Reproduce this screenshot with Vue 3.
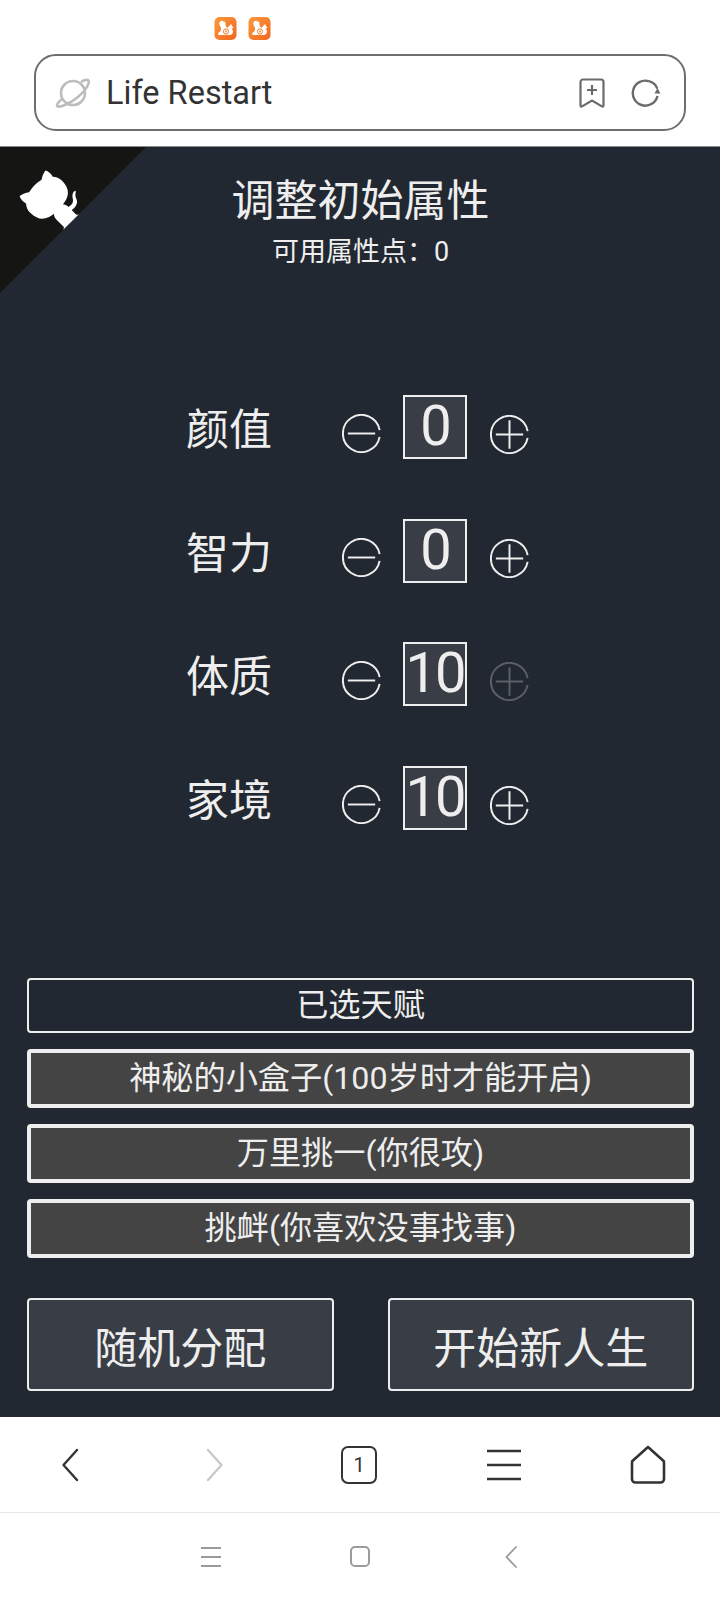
<script setup>
const stats = [
  { name: '颜值', value: 0, full: false },
  { name: '智力', value: 0, full: false },
  { name: '体质', value: 10, full: true },
  { name: '家境', value: 10, full: false }
]

const talents = [
  '神秘的小盒子(100岁时才能开启)',
  '万里挑一(你很攻)',
  '挑衅(你喜欢没事找事)'
]
</script>

<template>
  <div class="page">
    <header class="browser-top">
      <div class="status">
        <svg v-for="n in 2" :key="n" class="uc" viewBox="0 0 22 23">
          <defs>
            <linearGradient :id="'uc' + n" x1="0" y1="0" x2="1" y2="1">
              <stop offset="0" stop-color="#fb9a3c" />
              <stop offset="1" stop-color="#f2661f" />
            </linearGradient>
          </defs>
          <rect width="22" height="23" rx="5" :fill="'url(#uc' + n + ')'" />
          <path d="M8 3.500c-2.800.4-3.900 2.700-2.800 4.800 1 1.900 1.900 3.200.9 5.400-.6 1.300-1.500 1.900-2.300 2.100v2.200h11.200c2.300 0 3.500-1.500 3.500-3.400 0-1.300-.7-2.300-1.700-2.900l2.200-.6-1.500-2.400-.9-1.700-1.500 1.400-2.400 2.500c-1.300-1.800-2-3.200-1.800-4.700.2-1.300-.6-2.100-2.800-1.700z" fill="#fff" />
          <circle cx="11.500" cy="14.500" r="2.600" fill="none" stroke="#f47a28" stroke-width="1" />
          <circle cx="11.500" cy="14.500" r=".9" fill="#f47a28" />
        </svg>
      </div>
      <div class="address">
        <svg class="planet" viewBox="0 0 36 30" fill="none" stroke="#bdbdbd" stroke-width="2.600">
          <circle cx="18" cy="15" r="12" />
          <path d="M7 21C2 25 1 28 3 28.500c3 .7 12-3 20-9.500S35 4.500 33.500 2.500C32.500 1.200 29 2 26 4" />
        </svg>
        <span class="site">Life Restart</span>
        <svg class="bookmark" viewBox="0 0 26 30" fill="none" stroke="#6b6b6b" stroke-width="2.200">
          <path d="M4 1.500h18a2.500 2.500 0 0 1 2.500 2.500v23.500c0 1-.9 1.300-1.600.8L13 22.500 3.100 28.300c-.7.500-1.600.2-1.600-.8V4A2.500 2.500 0 0 1 4 1.500z" />
          <path d="M13 7v10M8 12h10" />
        </svg>
        <svg class="reload" viewBox="0 0 30 28" fill="none" stroke="#6b6b6b" stroke-width="2.400">
          <path d="M26.500 17A12.500 12.500 0 1 1 18 2.200" />
          <path d="M18 2.200c4 1 7 3.800 8.300 7.500" />
          <path d="M23.500 14.500h6l-3-5.500z" fill="#6b6b6b" stroke="none" />
        </svg>
      </div>
    </header>

    <main class="game">
      <svg class="corner" viewBox="0 0 250 250">
        <path d="M0,0 L115,115 L130,115 L142,142 L250,250 L250,0 Z" fill="#151513" />
        <path d="M128.3,109.0 C113.8,99.7 119.0,89.6 119.0,89.6 C122.0,82.7 120.5,78.6 120.5,78.6 C119.2,72.0 123.4,76.3 123.4,76.3 C127.3,80.9 125.5,87.3 125.5,87.3 C122.9,97.6 130.6,101.9 134.4,103.2" fill="#fff" />
        <path d="M115.0,115.0 C114.9,115.1 118.7,116.5 119.8,115.4 L133.7,101.6 C136.9,99.2 139.9,98.4 142.2,98.6 C133.8,88.0 127.5,74.4 143.8,58.0 C148.5,53.4 154.0,51.2 159.7,51.0 C160.3,49.4 163.2,43.6 171.4,40.1 C171.4,40.1 176.1,42.5 178.8,56.2 C183.1,58.6 187.2,61.8 190.9,65.4 C194.5,69.0 197.7,73.2 200.1,77.6 C213.8,80.2 216.3,84.9 216.3,84.9 C212.7,93.1 206.9,96.0 205.4,96.6 C205.1,102.4 203.0,107.8 198.3,112.5 C181.9,128.9 168.3,122.5 157.7,114.1 C157.9,116.9 156.7,120.9 152.7,124.9 L141.0,136.5 C139.8,137.7 141.6,141.9 141.8,141.8 Z" fill="#fff" />
      </svg>

      <h1 class="title">调整初始属性</h1>
      <div class="points">可用属性点：0</div>

      <section class="stats">
        <div v-for="s in stats" :key="s.name" class="stat">
          <span class="stat-name">{{ s.name }}</span>
          <svg class="round minus" viewBox="0 0 40 40" fill="none" stroke="currentColor" stroke-width="2">
            <path d="M38.600 16.500A19 19 0 1 0 38.600 23.500" />
            <path d="M6 20h28" />
          </svg>
          <span class="stat-value">{{ s.value }}</span>
          <svg class="round plus" :class="{ off: s.full }" viewBox="0 0 40 40" fill="none" stroke="currentColor" stroke-width="2">
            <path d="M38.600 16.500A19 19 0 1 0 38.600 23.500" />
            <path d="M6 20h28M20 5.500v29" />
          </svg>
        </div>
      </section>

      <section class="talents">
        <div class="talent-head">已选天赋</div>
        <div v-for="t in talents" :key="t" class="talent">{{ t }}</div>
      </section>

      <div class="actions">
        <div class="action">随机分配</div>
        <div class="action">开始新人生</div>
      </div>
    </main>

    <nav class="browser-nav">
      <svg class="nav-icon" viewBox="0 0 36 40" fill="none" stroke="#333" stroke-width="2.400" stroke-linecap="round" stroke-linejoin="round">
        <path d="M25 5 11.500 20 25 35" />
      </svg>
      <svg class="nav-icon" viewBox="0 0 36 40" fill="none" stroke="#c9c9c9" stroke-width="2.400" stroke-linecap="round" stroke-linejoin="round">
        <path d="M11 5 24.500 20 11 35" />
      </svg>
      <div class="tabs">1</div>
      <svg class="nav-icon" viewBox="0 0 36 40" fill="none" stroke="#333" stroke-width="2.600">
        <path d="M1 6h34M1 20h34M1 34h34" />
      </svg>
      <svg class="nav-icon" viewBox="0 0 36 40" fill="none" stroke="#333" stroke-width="2.600" stroke-linejoin="round">
        <path d="M18 2 33 15.500a2 2 0 0 1 1 2V34a3.500 3.500 0 0 1-3.500 3.500h-25A3.500 3.500 0 0 1 2 34V17.500a2 2 0 0 1 1-2z" />
      </svg>
    </nav>

    <div class="system-nav">
      <svg class="sys-lines" viewBox="0 0 20 20" fill="none" stroke="#9b9b9b" stroke-width="2">
        <path d="M0 1h20M0 10h20M0 19h20" />
      </svg>
      <div class="sys-square"></div>
      <svg class="sys-back" viewBox="0 0 12 22" fill="none" stroke="#9b9b9b" stroke-width="1.800" stroke-linecap="round">
        <path d="M11 1 1.500 11 11 21" />
      </svg>
    </div>
  </div>
</template>

<style scoped>
.page {
  width: 720px;
  height: 1600px;
  display: flex;
  flex-direction: column;
  background: #fff;
  font-family: Roboto, "Noto Sans CJK SC", sans-serif;
  overflow: hidden;
}

.browser-top {
  height: 147px;
  flex: none;
  box-sizing: border-box;
  padding-top: 17px;
  border-bottom: 1px solid #8a8a8a;
}

.status {
  height: 23px;
  display: flex;
  gap: 11px;
  padding-left: 214px;
}

.uc {
  width: 23px;
  height: 23px;
}

.address {
  box-sizing: border-box;
  width: 652px;
  height: 77px;
  margin: 14px 0 0 34px;
  border: 2px solid #6e6e6e;
  border-radius: 22px;
  display: flex;
  align-items: center;
  padding: 0 23px 0 19px;
}

.planet {
  width: 36px;
  height: 30px;
  flex: none;
}

.site {
  margin-left: 15px;
  flex: 1;
  font-size: 32.500px;
  color: #333;
}

.bookmark {
  width: 26px;
  height: 30px;
}

.reload {
  width: 30px;
  height: 28px;
  margin-left: 26px;
}

.game {
  position: relative;
  flex: 1;
  background: #222831;
  color: #eee;
  text-align: center;
  padding: 0 26px 0 27px;
}

.corner {
  position: absolute;
  left: 0;
  top: 0;
  width: 146px;
  height: 146px;
  transform: scaleX(-1);
}

.title {
  margin: 25px 0 0;
  font-size: 43px;
  line-height: 58px;
  font-weight: 400;
}

.points {
  margin-top: 5px;
  font-size: 27px;
  line-height: 34px;
}

.stats {
  margin-top: 126px;
  display: flex;
  flex-direction: column;
  gap: 59.500px;
  padding-left: 159px;
}

.stat {
  height: 64px;
  display: flex;
  align-items: center;
}

.stat-name {
  width: 156px;
  flex: none;
  text-align: left;
  font-size: 43px;
  margin-top: -2px;
}

.round {
  width: 39px;
  height: 39px;
  flex: none;
  margin-top: 13px;
  color: #eee;
}

.round.plus {
  margin-top: 15px;
}

.round.off {
  color: #5c5f65;
}

.stat-value {
  box-sizing: border-box;
  width: 64px;
  height: 64px;
  margin: 0 23px 0 22px;
  border: 2.500px solid #eee;
  background: #393e46;
  font-size: 56px;
  line-height: 59px;
  letter-spacing: -2px;
  white-space: nowrap;
}

.talents {
  margin-top: 148.500px;
  display: flex;
  flex-direction: column;
  gap: 16px;
}

.talent-head,
.talent {
  box-sizing: border-box;
  display: flex;
  align-items: center;
  justify-content: center;
  border-radius: 4px;
  font-size: 32.200px;
  padding-bottom: 7px;
}

.talent-head {
  height: 55px;
  border: 2.500px solid #eee;
}

.talent {
  height: 59px;
  border: 4.500px solid #eee;
  background: #444;
}

.actions {
  margin-top: 40px;
  display: flex;
  justify-content: space-between;
}

.action {
  box-sizing: border-box;
  width: 306.500px;
  height: 93px;
  display: flex;
  align-items: center;
  justify-content: center;
  border: 2px solid #eee;
  border-radius: 4px;
  background: #393e46;
  font-size: 43px;
}

.browser-nav {
  height: 96px;
  flex: none;
  box-sizing: border-box;
  border-bottom: 1px solid #e8e8e8;
  display: grid;
  grid-template-columns: repeat(5, 36px);
  justify-content: space-between;
  align-items: center;
  padding: 0 54px 0 52px;
}

.nav-icon {
  width: 36px;
  height: 40px;
}

.tabs {
  box-sizing: border-box;
  width: 36px;
  height: 38px;
  border: 2.500px solid #333;
  border-radius: 7px;
  display: flex;
  align-items: center;
  justify-content: center;
  font-size: 20px;
  color: #333;
}

.system-nav {
  height: 87px;
  flex: none;
  display: flex;
  align-items: center;
  justify-content: center;
  padding-right: 2px;
}

.sys-lines {
  width: 20px;
  height: 20px;
}

.sys-square {
  box-sizing: border-box;
  width: 20px;
  height: 21px;
  margin: 0 135px 0 129px;
  border: 2.500px solid #9b9b9b;
  border-radius: 5px;
}

.sys-back {
  width: 12px;
  height: 22px;
}
</style>
